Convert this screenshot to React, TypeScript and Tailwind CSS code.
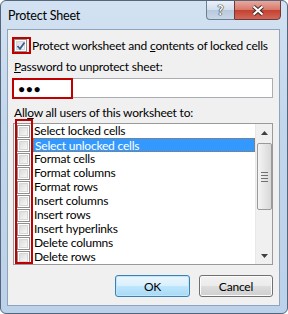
import React from "react"

const rows = [
  "Select locked cells",
  "Select unlocked cells",
  "Format cells",
  "Format columns",
  "Format rows",
  "Insert columns",
  "Insert rows",
  "Insert hyperlinks",
  "Delete columns",
  "Delete rows",
]

const Box = ({ checked = false }: { checked?: boolean }) => (
  <div className="relative w-[13px] h-[13px] shrink-0 border border-[#8e8f8f] bg-white p-[1px]">
    <div className="w-full h-full border border-[#d6d6d6] bg-[linear-gradient(135deg,#dcdcdc,#f7f7f7)]" />
    {checked && (
      <svg className="absolute left-[1px] top-[1px]" width="10" height="10" viewBox="0 0 10 10">
        <path d="M1.5 5 L4 7.8 L8.5 1.5" fill="none" stroke="#3b5998" strokeWidth="1.8" />
      </svg>
    )}
  </div>
)

const Btn = ({ label, primary = false }: { label: string; primary?: boolean }) => (
  <div
    className={
      "h-[22px] rounded-[3px] border flex items-center justify-center text-[12px] text-black " +
      (primary
        ? "w-[75px] border-[#3c7fb1] shadow-[inset_0_0_0_1px_#bfe6fa] bg-[linear-gradient(#eaf6fd_0%,#d9f0fc_50%,#bee6fd_51%,#a7d9f5_100%)]"
        : "w-[74px] border-[#707070] shadow-[inset_0_0_0_1px_#fcfcfc] bg-[linear-gradient(#f2f2f2_0%,#ebebeb_50%,#dddddd_51%,#cfcfcf_100%)]")
    }
  >
    {label}
  </div>
)

export default function App() {
  return (
    <div className="w-[288px] h-[314px] bg-white font-['Lato','Noto_Sans',sans-serif] text-black tracking-[-0.2px]">
      <div className="w-[288px] h-[314px] rounded-[6px] border border-[#55657a] bg-[linear-gradient(180deg,#d3e2f2_0%,#c2d6ec_40%,#bcd2ea_100%)] flex flex-col overflow-hidden">
        {/* title bar */}
        <div className="h-[28px] flex items-start shrink-0">
          <div className="pl-[7px] pt-[7px] text-[12.5px] leading-[15px]">Protect Sheet</div>
          <div className="ml-auto mr-[6px] flex -mt-[1px]">
            <div className="w-[28px] h-[20px] rounded-bl-[4px] border border-[#6e7f94] border-r-0 bg-[linear-gradient(#e9f0f8_0%,#d2deec_50%,#b6c8dc_51%,#c9d8e8_100%)] flex items-center justify-center">
              <span className="text-white font-bold text-[13px] leading-none [text-shadow:0_0_1px_#222,0_0_1px_#222,0_0_1px_#222]">?</span>
            </div>
            <div className="w-[47px] h-[20px] rounded-br-[4px] border border-[#6e3a35] bg-[linear-gradient(#e8a99f_0%,#d7786a_50%,#c4402f_51%,#d0685a_100%)] flex items-center justify-center">
              <svg width="14" height="11" viewBox="0 0 14 11">
                <path d="M2.5 1.5 L11.5 9.5 M11.5 1.5 L2.5 9.5" stroke="#3a2a28" strokeWidth="4" />
                <path d="M2.5 1.5 L11.5 9.5 M11.5 1.5 L2.5 9.5" stroke="#ffffff" strokeWidth="2.2" />
              </svg>
            </div>
          </div>
        </div>

        {/* client */}
        <div className="ml-[6px] w-[273px] h-[277px] border border-[#8fa3ba] bg-[#f0f0f0] flex flex-col text-[12px] leading-[15px] shrink-0">
          <div className="mt-[9px] ml-[6px] flex items-center h-[13px] relative">
            <Box checked />
            <span className="ml-[5px] whitespace-nowrap">
              Protect worksheet and <u>c</u>ontents of locked cells
            </span>
            <div className="absolute left-[-2px] top-[-2px] w-[19px] h-[17px] border-2 border-[#c00000]" />
          </div>

          <div className="mt-[7px] ml-[6px] whitespace-nowrap">
            <u>P</u>assword to unprotect sheet:
          </div>

          <div className="mt-[4px] ml-[4px] w-[261px] h-[20px] border border-[#abadb3] bg-white flex items-center pl-[5px] relative">
            <span className="text-[12px] tracking-[0.5px] font-['Noto_Sans',sans-serif]">●●●</span>
            <div className="absolute -left-[1px] -top-[1px] w-[61px] h-[21px] border-2 border-[#c00000]" />
          </div>

          <div className="mt-[7px] ml-[6px] whitespace-nowrap">
            All<u>o</u>w all users of this worksheet to:
          </div>

          <div className="mt-[3px] ml-[5px] w-[260px] h-[142px] border border-[#9a9a9a] bg-white flex relative">
            <div className="flex-1 overflow-hidden flex flex-col">
              {rows.map((r, i) => (
                <div key={i} className="h-[14px] shrink-0 flex items-center">
                  <div className="ml-[3px]">
                    <Box />
                  </div>
                  <span
                    className={
                      "ml-[3px] pl-[1px] h-[14px] leading-[14px] whitespace-nowrap " +
                      (i === 1
                        ? "flex-1 bg-[#3399ff] text-white border border-dotted border-[#b07030] leading-[12px]"
                        : "")
                    }
                  >
                    {r}
                  </span>
                </div>
              ))}
            </div>
            {/* scrollbar */}
            <div className="w-[17px] bg-[#f0f0f0] border-l border-[#e8e8e8] flex flex-col items-center">
              <div className="h-[17px] flex items-center justify-center">
                <svg width="7" height="4" viewBox="0 0 7 4">
                  <path d="M0 4 L3.5 0 L7 4 Z" fill="#404040" />
                </svg>
              </div>
              <div className="mt-[2px] w-[15px] h-[67px] rounded-[2px] border border-[#9a9a9a] bg-[linear-gradient(90deg,#f4f4f4,#e6e6e6_50%,#d8d8d8)] flex flex-col items-center justify-center gap-[2px]">
                <div className="w-[7px] h-[1px] bg-[#707070]" />
                <div className="w-[7px] h-[1px] bg-[#707070]" />
                <div className="w-[7px] h-[1px] bg-[#707070]" />
                <div className="w-[7px] h-[1px] bg-[#707070]" />
              </div>
              <div className="mt-auto h-[17px] flex items-center justify-center">
                <svg width="7" height="4" viewBox="0 0 7 4">
                  <path d="M0 0 L7 0 L3.5 4 Z" fill="#404040" />
                </svg>
              </div>
            </div>
            <div className="absolute left-[1px] top-[-5px] w-[18px] h-[145px] border-2 border-[#c00000]" />
          </div>

          <div className="mt-[10px] flex gap-[9px] justify-end mr-[6px]">
            <Btn label="OK" primary />
            <Btn label="Cancel" />
          </div>
        </div>
      </div>
    </div>
  )
}
